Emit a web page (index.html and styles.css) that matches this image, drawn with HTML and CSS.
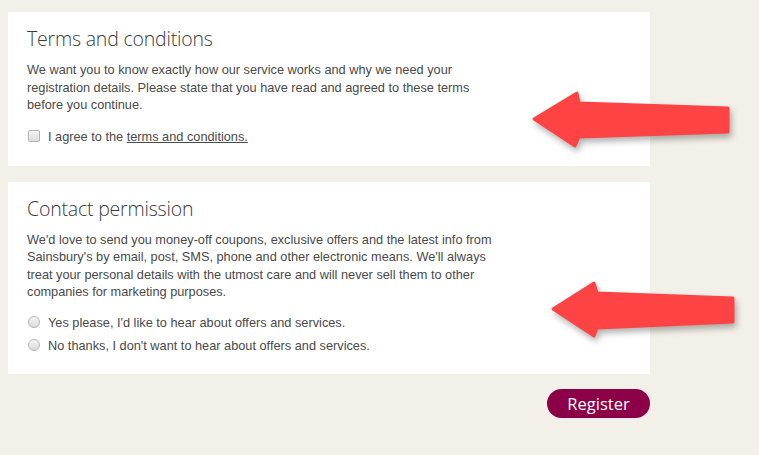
FILE: index.html
```html
<!DOCTYPE html>
<html lang="en">
<head>
    <meta charset="UTF-8">
    <meta name="viewport" content="width=device-width, initial-scale=1.0">
    <title>Register - Permissions</title>
    <link rel="stylesheet" href="styles.css">
</head>
<body>
    <div class="page">
        <div class="panel">
            <h2>Terms and conditions</h2>
            <p>We want you to know exactly how our service works and why we need your registration details. Please state that you have read and agreed to these terms before you continue.</p>
            <label class="option">
                <input type="checkbox" name="terms">
                <span>I agree to the <a href="#">terms and conditions.</a></span>
            </label>
        </div>

        <div class="panel panel-contact">
            <h2>Contact permission</h2>
            <p>We'd love to send you money-off coupons, exclusive offers and the latest info from Sainsbury's by email, post, SMS, phone and other electronic means. We'll always treat your personal details with the utmost care and will never sell them to other companies for marketing purposes.</p>
            <label class="option">
                <input type="radio" name="contact" value="yes">
                <span>Yes please, I'd like to hear about offers and services.</span>
            </label>
            <label class="option">
                <input type="radio" name="contact" value="no">
                <span>No thanks, I don't want to hear about offers and services.</span>
            </label>
        </div>

        <div class="actions">
            <button type="submit">Register</button>
        </div>

        <!-- annotation arrows drawn over the form -->
        <svg class="arrows" width="759" height="455" viewBox="0 0 759 455">
            <polygon points="534,119 577,93 579,103 728,108 728,132 579,137 575,146" />
            <polygon points="553,309 594,283 597,293 733,298 733,322 597,328 594,336" />
        </svg>
    </div>
</body>
</html>
```

FILE: styles.css
```css
body {
    margin: 0;
    padding: 0;
    background: #f2f0e8;
    font-family: "Liberation Sans", Arial, sans-serif;
    color: #4a4a4a;
}
.page {
    position: relative;
    width: 759px;
    height: 455px;
    padding: 12px 0 0 8px;
    box-sizing: border-box;
}
.panel {
    background: #fff;
    width: 642px;
    padding: 14px 19px 15px;
    box-sizing: border-box;
}
.panel-contact {
    margin-top: 16px;
    padding-bottom: 14px;
}
.panel-contact p {
    margin-bottom: 13px;
}
h2 {
    font-family: "Open Sans", "Noto Sans", sans-serif;
    font-weight: 300;
    font-size: 19.5px;
    letter-spacing: -0.2px;
    line-height: 26px;
    color: #3c3c3c;
    margin: 0 0 9px;
}
p {
    font-size: 12.75px;
    line-height: 17.5px;
    margin: 0 0 14px;
    max-width: 476px;
}
.option {
    display: flex;
    align-items: center;
    gap: 8px;
    font-size: 12.75px;
    line-height: 17px;
    margin-bottom: 6px;
}
.option input {
    appearance: none;
    -webkit-appearance: none;
    margin: 0 0 0 1px;
    width: 12px;
    height: 12px;
    border: 1px solid #b5b5b5;
    background: linear-gradient(#f4f4f4, #dcdcdc);
    box-sizing: border-box;
    border-radius: 2px;
}
.option input[type="radio"] {
    border-radius: 50%;
}
.option a {
    color: #4a4a4a;
    text-decoration: underline;
}
.actions {
    width: 642px;
    display: flex;
    justify-content: flex-end;
    margin-top: 15px;
}
button {
    background: #8c0047;
    color: #fff;
    border: none;
    border-radius: 15px;
    width: 103px;
    height: 29px;
    font-family: "Open Sans", "Noto Sans", sans-serif;
    font-size: 16.5px;
    cursor: pointer;
    padding: 0;
}
button:hover {
    background: #73003a;
}
.arrows {
    position: absolute;
    top: 0;
    left: 0;
    pointer-events: none;
}
.arrows polygon {
    fill: #fd4343;
    stroke: #fd4343;
    stroke-width: 3;
    stroke-linejoin: round;
    filter: drop-shadow(2px 4px 3px rgba(0, 0, 0, 0.3));
}
```
